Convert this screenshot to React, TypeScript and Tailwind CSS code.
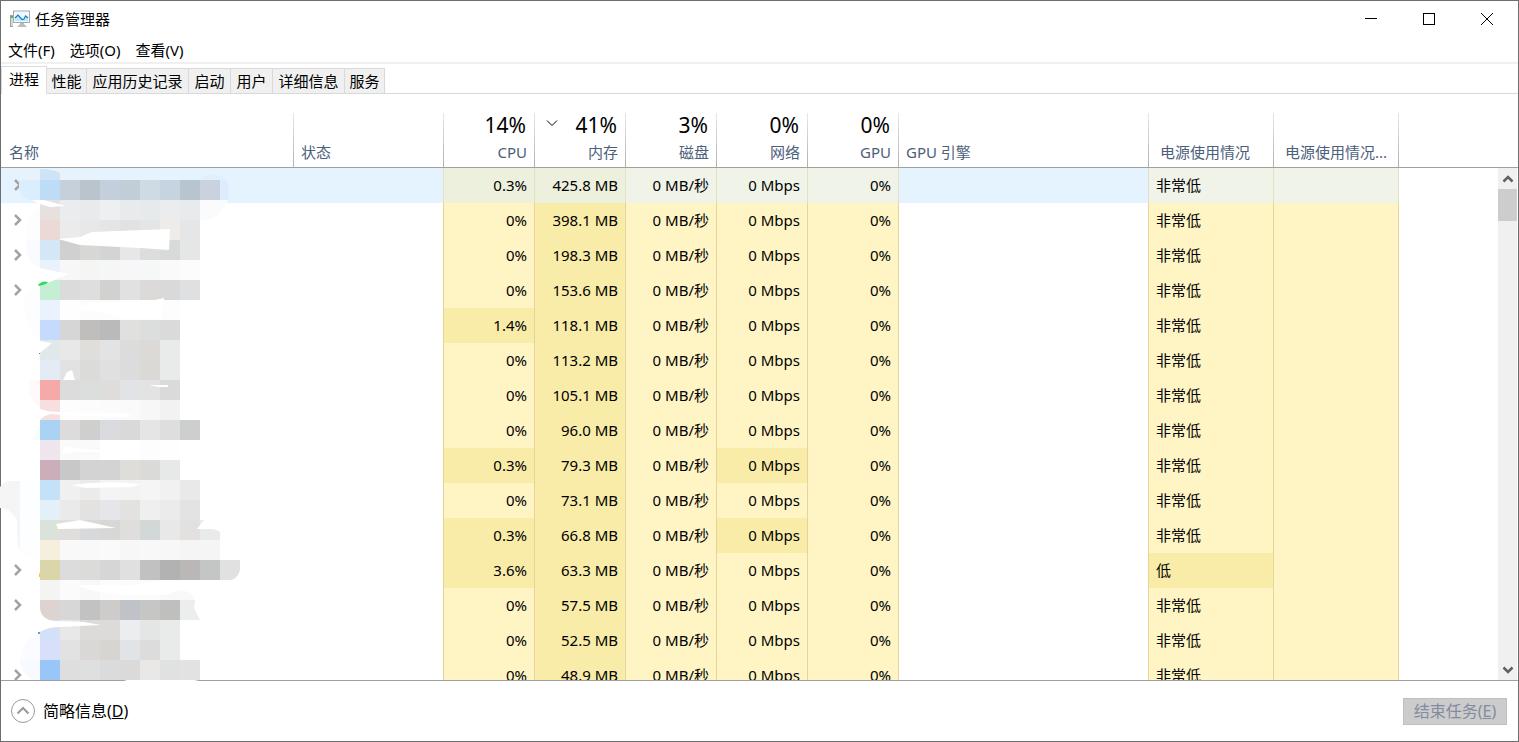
import React from "react";
import clsx from "clsx";

interface ProcessRow {
  expandable?: boolean;
  cpu: string;
  memory: string;
  busyNetwork?: boolean;
  power?: string;
}

const PROCESSES: ProcessRow[] = [
  { expandable: true, cpu: "0.3%", memory: "425.8 MB" },
  { expandable: true, cpu: "0%", memory: "398.1 MB" },
  { expandable: true, cpu: "0%", memory: "198.3 MB" },
  { expandable: true, cpu: "0%", memory: "153.6 MB" },
  { cpu: "1.4%", memory: "118.1 MB" },
  { cpu: "0%", memory: "113.2 MB" },
  { cpu: "0%", memory: "105.1 MB" },
  { cpu: "0%", memory: "96.0 MB" },
  { cpu: "0.3%", memory: "79.3 MB", busyNetwork: true },
  { cpu: "0%", memory: "73.1 MB" },
  { cpu: "0.3%", memory: "66.8 MB", busyNetwork: true },
  { expandable: true, cpu: "3.6%", memory: "63.3 MB", power: "低" },
  { expandable: true, cpu: "0%", memory: "57.5 MB" },
  { cpu: "0%", memory: "52.5 MB" },
  { expandable: true, cpu: "0%", memory: "48.9 MB" },
];

const MENUS = ["文件(F)", "选项(O)", "查看(V)"];

const TABS = [
  { label: "性能", width: "w-10" },
  { label: "应用历史记录", width: "w-[102px]" },
  { label: "启动", width: "w-[42px]" },
  { label: "用户", width: "w-[42px]" },
  { label: "详细信息", width: "w-[72px]" },
  { label: "服务", width: "w-10" },
];

const COLUMNS = [
  { label: "名称", width: "w-[293px]", pad: "pl-2" },
  { label: "状态", width: "w-[150px]", pad: "pl-[7px]" },
  { label: "CPU", total: "14%", width: "w-[91px]" },
  { label: "内存", total: "41%", width: "w-[91px]", sorted: true },
  { label: "磁盘", total: "3%", width: "w-[91px]" },
  { label: "网络", total: "0%", width: "w-[91px]" },
  { label: "GPU", total: "0%", width: "w-[91px]" },
  { label: "GPU 引擎", width: "w-[250px]", pad: "pl-[7px]" },
  { label: "电源使用情况", width: "w-[125px]", pad: "pl-[11px]" },
  { label: "电源使用情况...", width: "w-[125px]", pad: "pl-[11px]" },
];

// Blocks that hide the process names: 20px cells, one list per line.
const MOSAIC = [
  "bddcf5 c6d0db b9c4cd c3cfdd c1ced8 cedae4 c6d3e0 b9c5ce c9d2de",
  "e6e0df ebecee e9eaec eeeff1 e8eaeb e6eaea ebecee e7ebee",
  "ead9d6 ebebeb e8e8e8 e5e5e5 e2e2e2 e4e5e5 eeeceb e4e6e8",
  "d4e7f6 d0d0d0 d7d7d5 d3d5d5 e8e6e7 dddddd d8dada e5e7e6",
  "e9f1fb f7f7f7 f5f6f4 f4f7f6 f7f6f8 f6f8f8 fafafa fcfcfc",
  "c4efd4 dbdbdb dedede d1d1cf e1e1e1 dcdad8 d9d9d9 dfe0e1",
  "eaf2fe fefefe fcfcfc fcfcfc fdfdfd fdfdfd fdfdfd",
  "c5dafd d6d6d6 bfbebc bababa e0e0de dcdedd dadada",
  "e1e8ea e8e8e8 e0dedb e1e4e2 dcdcdc dcd9d7 e8ebe9",
  "e3ecf4 e2e2e2 dbdbd9 e0e0e0 dcdcdc dbd9d6 e8ebe9",
  "f5aaa9 dcdcdc dcdedd dfdddb e1e3e6 e3e3e3 dadada",
  "f8dfdf fdfdfd fcfcfc fbfbfb fafafa f7f7f7 f2f2f2",
  "aad3f3 dedbdd cfcfcd dadbdf d9d9d9 e5e5e5 dedede cccfce",
  "efe5ec fafafa fafafa ffffff ffffff fdfdfd fefefe",
  "cbaeba c8c8c8 d3d3d3 d3d3d3 dfddda dadad8 e6e9e7",
  "c4e1f7 f0f0f0 ebebeb f4f4f4 f3f3f3 f5f5f5 f1f1f1 e9e9e9",
  "e4f0f9 eaeaea e3e2e0 e4e6e9 e2e2e0 efefef ebebeb e3e3e3",
  "dae2da dfdedd d7d9db d7d7d5 dfdedc d2d7d7 e8e8e8 e2e1df e9ebeb",
  "f6efdd f9f9f9 f9f9f9 fafafa f7f7f7 f8f8f8 f7f7f7 f5f5f5 f5f5f5",
  "dbd6a9 dcdcdc dbdbd9 d6d6d6 e0e0e0 c1c1c1 b2b2b2 bab7b6 c4c6c5 e1e1e1",
  "f4f4f2 fbfbfb f8f8f8 fcfcfc fbfbfb fbfbfb f9f9f9 f9f9f9",
  "ddd3d1 d7d7d7 c2c2c2 cdccca bfc2c7 c6c6c4 bfbfbd ecedef",
  "d3e0f7 e8e8e8 dcdbd9 dcdbd9 ebedef e4e6e5 e9ebea",
  "d8dffa e2e2e2 d9d8d6 d7d5d2 e1e4e6 dcdcdc e8ebea",
  "99c6f9 dedede dde0df dadcdb dadada eae8e6 e0e2e1 e2e2e2",
].map((line) => line.split(" "));

function NameMosaic() {
  return (
    <svg
      aria-hidden="true"
      className="pointer-events-none absolute -left-px top-[74px] h-[514px] w-[240px]"
      viewBox="0 168 240 514"
    >
      {/* soft halos round the blocks */}
      <path fill="#e9f2fa" d="M40 170H60V174C85 171 96 178 110 180H30Q24 180 20 188V180Q24 171 40 170Z" />
      <path fill="#e1effb" d="M200 180Q203 175 212 175Q223 174 225 180Z" />
      <path fill="#cde3f6" d="M40 169Q52 169 60 173V180H40Z" />
      <path fill="#dbeefe" d="M19 180H40V200H30Q20 198 19 188Z" />
      <path fill="#dcecfe" d="M220 180H226Q231 188 228 200H220Z" />
      <path fill="#fafbfd" d="M200 200H228Q222 214 210 220H200Z" />
      <path fill="#fcfefe" d="M40 207Q27 213 26 230V240H40Z" />
      <path fill="#f9fbfe" d="M26 240H40V268Q28 264 26 250Z" />
      <path fill="#fbfefc" d="M40 285Q24 292 24 300H40Z" />
      <path fill="#fbfdff" d="M24 300H40V340Q26 330 24 305Z" />
      <path fill="#fdfefe" d="M40 352Q30 368 29 380H40Z" />
      <path fill="#fff9f9" d="M29 380H40V408Q29 400 29 390Z" />
      <path fill="#f8fbfe" d="M40 420V422L33 440H40Z" />
      <path fill="#f5f5f5" d="M0 487Q4 481 12 481H20V550Q17 548 17 520Q10 508 0 508Z" />
      <path fill="#fcfeff" d="M20 481H40V560Q20 558 20 545Z" />
      <path fill="#fbfcff" d="M40 630Q22 640 20 660H40Z" />
      <path fill="#f7fbff" d="M20 660H40V680H36Q22 677 20 660Z" />

      {MOSAIC.map((line, row) =>
        line.map((color, col) => (
          <rect
            key={`${row}-${col}`}
            x={40 + col * 20}
            y={180 + row * 20}
            width={20}
            height={20}
            fill={`#${color}`}
            shapeRendering="crispEdges"
          />
        )),
      )}

      {/* brush strokes that run over the blocks */}
      <g fill="#fff">
        <path d="M32 200H44L66 206L50 207L40 204Z" />
        <path d="M58 239L80 237L92 232L170 229L169 250L140 248L80 245Z" />
        <path d="M40 268L69 274L50 282L40 285Z" />
        <path d="M66 310L90 303L150 301L164 298L162 318H120L100 311Z" />
        <path d="M40 341L52 343L40 353Z" />
        <path d="M63 380L67 372L72 370L75 380Z" />
        <path d="M149 385H168V387H158Z" />
        <path d="M40 409Q48 412 60 412L122 413L133 415L122 417L80 416L50 414Q43 416 40 420Z" />
        <path d="M62 454L65 446L80 449L100 450V452L75 452Z" />
        <path d="M71 485Q105 480 141 484L133 487L85 488Z" />
        <path d="M56 524L80 520L116 528L58 529Z" />
        <path d="M200 520H220V529H197L204 520Z" />
        <path d="M220 529V532Q216 529 210 529Z" />
        <path d="M240 560V570Q238 578 231 580H240Z" />
        <path d="M75 585L100 585Q140 587 160 580H200V600H195Q192 590 178 590L165 595H122Q92 592 75 585Z" />
        <path d="M195 600H200V620L194 608Z" />
        <path d="M40 609Q42 620 55 621L84 622L101 625L60 627Q48 627 40 632V620Z" />
        <path d="M124 680H199L190 682H130Z" />
      </g>
      <path fill="#35d968" d="M38 285Q42 280 48 282L46 284L39 286Z" />
      <path fill="#fbc52d" d="M39 572L41 577H39Z" />
      <path fill="#6f8ff0" d="M38 632H40V634H38Z" />
      <path fill="#777" d="M39 353H40V354H39Z" />
    </svg>
  );
}

function TaskManagerIcon() {
  return (
    <svg aria-hidden="true" className="h-[18px] w-5" viewBox="0 0 20 18">
      <path fill="#9da1a4" d="M0 5H3V17H0Z" />
      <path fill="#d5d8da" d="M1 8H3V16H1Z" />
      <path fill="#3fc43a" d="M1 6H3V8H1Z" />
      <rect x="3.5" y="1" width="16" height="11.5" fill="#eef8fe" stroke="#a5a9ac" />
      <path fill="#bfe6fa" d="M5 8L8 5L12 9L14 8L18 6V11H5Z" />
      <path fill="none" stroke="#1583c4" strokeWidth="1.2" d="M5 8L8 5L12 9.5L14 9L15.5 6L18 8" />
      <path fill="#b9bcbf" d="M10 13H14V14L17 17H7L10 14Z" />
    </svg>
  );
}

function Chevron({ className, d }: { className: string; d: string }) {
  return (
    <svg aria-hidden="true" className={className} viewBox="0 0 12 12" fill="none" stroke="currentColor">
      <path d={d} />
    </svg>
  );
}

function TitleBar() {
  return (
    <header className="flex h-9 items-center pl-[9px]">
      <TaskManagerIcon />
      <h1 className="flex-1 pl-[5px] text-[15px] leading-5">任务管理器</h1>
      <div className="flex gap-3 pr-2">
        <button aria-label="最小化" className="flex h-9 w-[46px] items-center justify-center">
          <svg className="h-3 w-3" viewBox="0 0 12 12">
            <path d="M0 5H12V6H0Z" />
          </svg>
        </button>
        <button aria-label="最大化" className="flex h-9 w-[46px] items-center justify-center">
          <svg className="h-3 w-3" viewBox="0 0 12 12" fill="none" stroke="black">
            <rect x="0.5" y="0.5" width="11" height="11" />
          </svg>
        </button>
        <button aria-label="关闭" className="flex h-9 w-[46px] items-center justify-center">
          <svg className="h-3 w-3" viewBox="0 0 12 12" stroke="black">
            <path d="M0 0L12 12M12 0L0 12" />
          </svg>
        </button>
      </div>
    </header>
  );
}

function Tabs() {
  return (
    <div role="tablist" className="flex h-[30px] items-end text-[15px] leading-5">
      <button
        role="tab"
        aria-selected="true"
        className="h-7 w-[46px] border-x border-t border-[#dcdcdc] pb-1"
      >
        进程
      </button>
      {TABS.map((tab) => (
        <button
          key={tab.label}
          role="tab"
          aria-selected="false"
          className={clsx(
            "h-[26px] whitespace-nowrap border-y border-r border-[#d9d9d9] bg-[#f0f0f0]",
            tab.width,
          )}
        >
          {tab.label}
        </button>
      ))}
      <div className="h-px flex-1 bg-[#d9d9d9]" />
    </div>
  );
}

function HeaderCell({ column }: { column: (typeof COLUMNS)[number] }) {
  return (
    <th scope="col" className="border-b border-[#a0a0a0] p-0 pt-[19px] font-normal">
      <div className="flex h-[54px]">
        <div className={clsx("min-w-0 flex-1", column.total ? "pr-[7px] text-right" : "text-left", column.pad)}>
          <div className="flex h-6 items-center justify-between pr-px text-[21px] leading-6 text-black">
            {column.sorted ? (
              <Chevron className="mb-1 ml-[11px] h-3 w-3" d="M1 3.5L6 8.5L11 3.5" />
            ) : (
              <span />
            )}
            <span>{column.total}</span>
          </div>
          <div className="h-[30px] whitespace-nowrap leading-[30px] text-[#4c607a]">{column.label}</div>
        </div>
        <div className="w-px bg-linear-to-b from-[#e8e8e8] to-[#b0b0b0]" />
      </div>
    </th>
  );
}

function ProcessTable() {
  const line = "border-r p-0 pb-[2px]";

  return (
    <table className="w-full flex-1 table-fixed border-separate border-spacing-0 self-start text-[15px] leading-5">
      <colgroup>
        {COLUMNS.map((column, i) => (
          <col key={i} className={column.width} />
        ))}
        <col />
      </colgroup>
      <thead>
        <tr>
          {COLUMNS.map((column, i) => (
            <HeaderCell key={i} column={column} />
          ))}
          <td className="border-b border-[#a0a0a0]" />
        </tr>
      </thead>
      <tbody>
        {PROCESSES.map((row, i) => {
          const selected = i === 0;
          const plain = selected ? "bg-[#e5f3ff]" : "bg-white";
          const border = selected ? "border-[#e6e0c4]" : "border-[#e8d499]";
          const light = selected ? "bg-[#f0f3e8]" : "bg-[#fff4c4]";
          const dark = selected ? "bg-[#edf0dc]" : "bg-[#f9eca8]";
          const number = clsx(line, border, "pr-[7px] text-right whitespace-nowrap");

          return (
            <tr key={row.memory} aria-selected={selected} className="h-[35px]">
              <td className={clsx("p-0 pb-[2px] pl-[13px]", plain)}>
                {row.expandable && (
                  <button aria-label="展开" className="block text-[#a3a3a3]">
                    <Chevron className="h-3 w-3 stroke-[2.5]" d="M1 1L6 6L1 11" />
                  </button>
                )}
              </td>
              <td className={clsx(line, border, plain)} />
              <td className={clsx(number, selected || row.cpu !== "0%" ? dark : light)}>{row.cpu}</td>
              <td className={clsx(number, dark)}>{row.memory}</td>
              <td className={clsx(number, light)}>0 MB/秒</td>
              <td className={clsx(number, row.busyNetwork ? dark : light)}>0 Mbps</td>
              <td className={clsx(number, light)}>0%</td>
              <td className={clsx(line, border, plain)} />
              <td className={clsx(line, border, "pl-[7px]", row.power ? dark : light)}>
                {row.power ?? "非常低"}
              </td>
              <td className={clsx(line, border, light)} />
              <td />
            </tr>
          );
        })}
      </tbody>
    </table>
  );
}

function ScrollBar() {
  return (
    <div className="flex w-5 shrink-0 flex-col">
      <div className="h-[74px] border-b border-[#a0a0a0]" />
      <div className="mr-px flex flex-1 flex-col items-center bg-[#f0f0f0]">
        <button aria-label="向上滚动" className="flex h-[21px] items-center text-[#606060]">
          <Chevron className="h-3 w-3 stroke-[2.5]" d="M1.5 8.5L6 4L10.5 8.5" />
        </button>
        <div className="h-8 w-full bg-[#cdcdcd]" />
        <div className="flex-1" />
        <button aria-label="向下滚动" className="flex h-[21px] items-center text-[#606060]">
          <Chevron className="h-3 w-3 stroke-[2.5]" d="M1.5 3.5L6 8L10.5 3.5" />
        </button>
      </div>
    </div>
  );
}

function Footer() {
  return (
    <footer className="flex h-[61px] items-center justify-between border-t border-[#a0a0a0] pl-[10px] pr-[11px] text-base leading-6">
      <button className="flex items-center gap-2">
        <svg aria-hidden="true" className="h-6 w-6" viewBox="0 0 24 24" fill="none" stroke="#9a9a9a">
          <circle cx="12" cy="12" r="11.5" />
          <path strokeWidth="2" d="M6.5 14.5L12 9L17.5 14.5" />
        </svg>
        <span>
          简略信息(<u>D</u>)
        </span>
      </button>
      <button
        disabled
        className="h-[27px] w-[104px] whitespace-nowrap border border-[#bfbfbf] bg-[#cccccc] leading-6 text-[#838b9f]"
      >
        结束任务(<u>E</u>)
      </button>
    </footer>
  );
}

export default function App() {
  return (
    <div className="flex h-screen flex-col border border-[#6e6e6e] bg-white font-['Noto_Sans','Noto_Sans_CJK_SC',sans-serif] text-black">
      <TitleBar />
      <nav className="flex h-[27px] items-center gap-[15px] border-b-2 border-[#f0f0f0] pl-[7px] text-[15px] leading-5">
        {MENUS.map((menu) => (
          <button key={menu}>{menu}</button>
        ))}
      </nav>
      <Tabs />
      <main className="relative min-h-0 flex-1">
        <div className="flex h-full overflow-hidden">
          <ProcessTable />
          <ScrollBar />
        </div>
        <NameMosaic />
      </main>
      <Footer />
    </div>
  );
}
